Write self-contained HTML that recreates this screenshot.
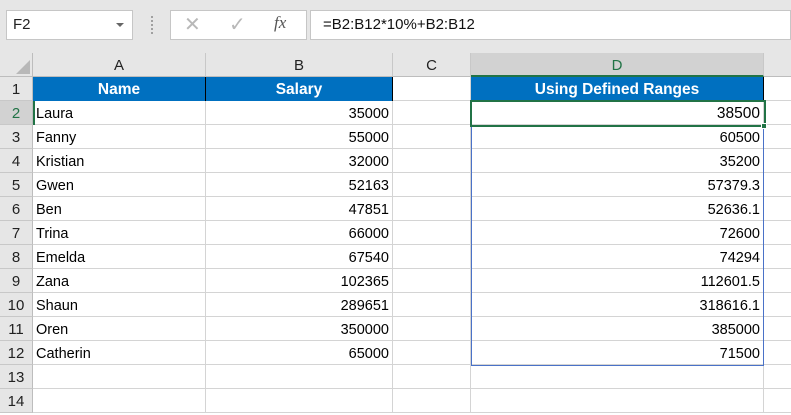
<!DOCTYPE html>
<html><head><style>
*{margin:0;padding:0;box-sizing:border-box}
body{width:791px;height:405px;overflow:hidden;background:#fff;font-family:"Liberation Sans",Arial,sans-serif;position:relative}
.a{position:absolute}
.tb{left:0;top:0;width:791px;height:53px;background:#e6e6e6}
.box{background:#fff;border:1px solid #c6c6c6}
.ch{top:53px;height:24px;background:#e6e6e6;border-right:1px solid #c8c8c8;border-bottom:1px solid #bdbdbd;text-align:center;font-size:15px;line-height:26px;color:#222}
.rh{left:0;width:33px;height:24px;background:#e6e6e6;border-bottom:1px solid #c8c8c8;border-right:1px solid #bdbdbd;text-align:center;font-size:15px;line-height:26px;color:#222}
.c{height:24px;border-right:1px solid #d4d4d4;border-bottom:1px solid #d4d4d4;font-size:14.5px;line-height:26px;padding:0 3px;color:#000;white-space:nowrap}
.r{text-align:right}
.h{background:#0070c0;color:#fff;font-weight:bold;text-align:center;font-size:15.5px;border-right:1px solid #000;border-bottom:none}
</style></head><body>
<div class="a tb"></div>
<div class="a box" style="left:6px;top:10px;width:127px;height:30px;font-size:15px;line-height:28px;padding-left:6px;color:#222">F2</div>
<div class="a" style="left:116px;top:23px;width:0;height:0;border-left:4px solid transparent;border-right:4px solid transparent;border-top:4px solid #666"></div>
<div class="a" style="left:151px;top:16px;width:2px;height:18px;border-left:2px dotted #a0a0a0"></div>
<div class="a box" style="left:170px;top:10px;width:137px;height:30px"></div>
<div class="a" style="left:184px;top:12px;font-size:20px;color:#b8b8b8">✕</div>
<div class="a" style="left:229px;top:12px;font-size:20px;color:#b8b8b8">✓</div>
<div class="a" style="left:274px;top:13px;font-size:17px;font-style:italic;font-family:'Liberation Serif',serif;color:#555">fx</div>
<div class="a box" style="left:310px;top:10px;width:481px;height:30px;font-size:15px;line-height:28px;padding-left:12px;color:#111">=B2:B12*10%+B2:B12</div>

<div class="a" style="left:0;top:53px;width:33px;height:24px;background:#e6e6e6;border-right:1px solid #bdbdbd;border-bottom:1px solid #bdbdbd"></div>
<div class="a" style="left:16px;top:60px;width:0;height:0;border-left:14px solid transparent;border-bottom:14px solid #b8b8b8"></div>
<div class="a ch" style="left:33px;width:173px">A</div>
<div class="a ch" style="left:206px;width:187px">B</div>
<div class="a ch" style="left:393px;width:78px">C</div>
<div class="a ch" style="left:471px;width:293px;background:#d2d2d2;color:#217346;border-bottom:2px solid #217346">D</div>
<div class="a ch" style="left:764px;width:40px"></div>

<div id="g"></div>
<script>
var names=["Laura","Fanny","Kristian","Gwen","Ben","Trina","Emelda","Zana","Shaun","Oren","Catherin"];
var sal=[35000,55000,32000,52163,47851,66000,67540,102365,289651,350000,65000];
var d=["38500","60500","35200","57379.3","52636.1","72600","74294","112601.5","318616.1","385000","71500"];
var h="";
for(var i=1;i<=14;i++){
 var y=77+(i-1)*24;
 var st=i==2?"background:#d2d2d2;color:#217346;":"";
 h+='<div class="a rh" style="top:'+y+'px;'+st+'">'+i+'</div>';
 if(i==1){
  h+='<div class="a c h" style="left:33px;top:77px;width:173px">Name</div>';
  h+='<div class="a c h" style="left:206px;top:77px;width:187px">Salary</div>';
  h+='<div class="a c" style="left:393px;top:77px;width:78px"></div>';
  h+='<div class="a c h" style="left:471px;top:77px;width:293px">Using Defined Ranges</div>';
  h+='<div class="a c" style="left:764px;top:77px;width:40px"></div>';
 } else {
  var n=i<=12?names[i-2]:"",s=i<=12?sal[i-2]:"",v=i<=12?d[i-2]:"";
  h+='<div class="a c" style="left:33px;top:'+y+'px;width:173px">'+n+'</div>';
  h+='<div class="a c r" style="left:206px;top:'+y+'px;width:187px">'+s+'</div>';
  h+='<div class="a c" style="left:393px;top:'+y+'px;width:78px"></div>';
  h+='<div class="a c r" style="left:471px;top:'+y+'px;width:293px;'+(i==2?'font-size:15.5px;':'')+'">'+v+'</div>';
  h+='<div class="a c" style="left:764px;top:'+y+'px;width:40px"></div>';
 }
}
document.getElementById("g").innerHTML=h;
</script>
<div class="a" style="left:205px;top:77px;width:1px;height:24px;background:#000"></div>
<div class="a" style="left:471px;top:125px;width:293px;height:241px;border:1px solid #4a72c8;border-top:none"></div>
<div class="a" style="left:470px;top:100px;width:296px;height:27px;border:2px solid #217346"></div>
<div class="a" style="left:761px;top:123px;width:6px;height:6px;background:#217346;border:1px solid #fff"></div>
<div class="a" style="left:33px;top:101px;width:2px;height:24px;background:#217346"></div>
</body></html>
